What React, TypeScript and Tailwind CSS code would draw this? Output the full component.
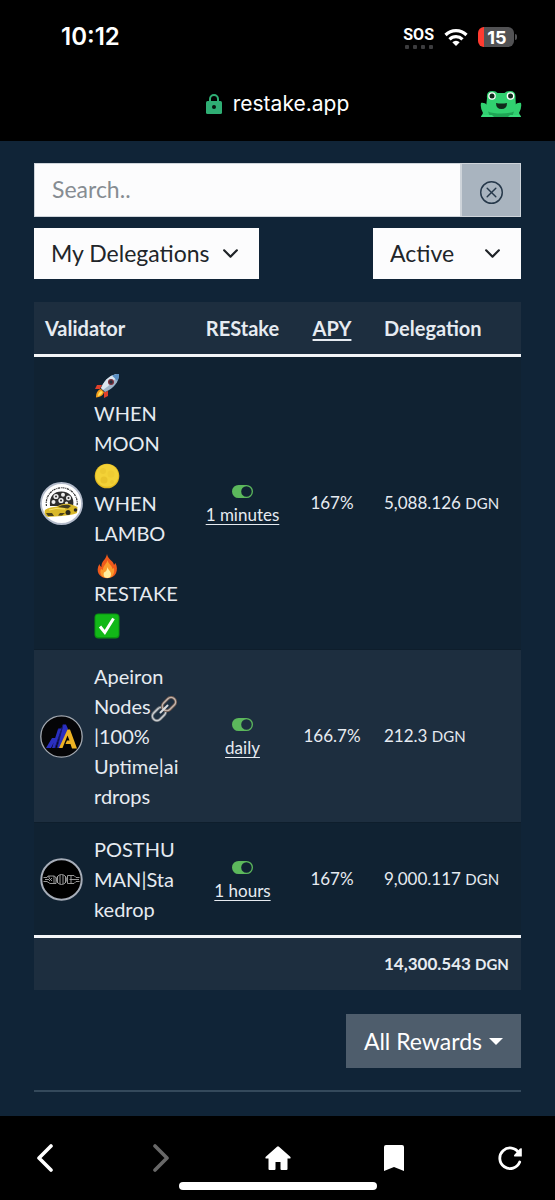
import { useState } from "react";
import type { ReactNode } from "react";
import { BsChevronDown, BsToggleOn, BsXCircle } from "react-icons/bs";

function Rocket() {
  return (
    <svg viewBox="0 0 26 26" className="-my-1 inline-block size-[26px] align-middle">
      <path d="M8 12 3 12 1 16 6 16Z M14 18 14 23 10 25 10 19Z" fill="#e0402a" />
      <path d="M7 16C3 17 2 21 2 24.500C6 24 9 23 10 19Z" fill="#f6a01d" />
      <path d="M7 18C5 19 4 21 4 23C6 22.500 8 21 8.500 19Z" fill="#ffe45c" />
      <path d="M25 1C17 1 11 6 7 15L11 19C20 15 25 9 25 1Z" fill="#9fb4c8" />
      <path d="M25 1C17 1 11 6 7 15L9 17C16 12 21 7 25 1Z" fill="#dbe6ef" />
      <path d="M25 1C22 1 20 1.500 18 2.600L23.300 8C24.500 6 25 4 25 1Z" fill="#5a8fc4" />
      <circle cx="17" cy="9" r="3" fill="#7d2f3a" />
      <circle cx="17" cy="9" r="1.700" fill="#22303d" />
    </svg>
  );
}

function Moon() {
  return (
    <svg viewBox="0 0 26 26" className="-my-1 inline-block size-[26px] align-middle">
      <circle cx="13" cy="13" r="12.300" fill="#e3b920" />
      <circle cx="13" cy="12.500" r="11.300" fill="#f3d237" />
      <circle cx="9" cy="8" r="3" fill="#ecc931" />
      <circle cx="17" cy="11" r="3.500" fill="#efcc33" />
      <circle cx="10" cy="17" r="3.500" fill="#e9c42c" />
      <circle cx="18" cy="19" r="2" fill="#ecc830" />
    </svg>
  );
}

function Fire() {
  return (
    <svg viewBox="0 0 26 26" className="-my-1 inline-block size-[26px] align-middle">
      <path d="M13 1C14 7 19 7 20 12L21.500 10C25 17 22 25 13.500 25.300C5 25.300 1 18 5.500 11C6 13 6.500 13.500 7.500 14C7 8 12 7 13 1Z" fill="#ef5a1c" />
      <path d="M13.500 7C14 11 18 12 18.500 16L20 15C21 21 18 25 13.500 25C8 25 5 21 7 16L9 17C9 12 13 11 13.500 7Z" fill="#fb9b2b" />
      <path d="M13.500 14C14 17 17 18 17 21C17 24 15 25 13.300 25C10 25 9 22 10 19.500C12 19 13 17 13.500 14Z" fill="#fff0a0" />
    </svg>
  );
}

function CheckMark() {
  return (
    <svg viewBox="0 0 26 26" className="-my-1 inline-block size-[26px] align-middle">
      <rect x="0.500" y="0.500" width="25" height="25" rx="4" fill="#0b9410" />
      <rect x="1.500" y="1.500" width="23" height="22.500" rx="3" fill="#12b818" />
      <path d="M6 13.500 10.800 19.500 19.500 5.500" fill="none" stroke="#fff" strokeWidth="3" />
    </svg>
  );
}

function ChainLink() {
  return (
    <svg viewBox="0 0 26 26" className="-my-1 inline-block size-[26px] align-middle" fill="none">
      <g transform="rotate(-45 13 13)">
        <rect x="-1.500" y="8.500" width="15" height="9" rx="4.500" stroke="#6f7479" strokeWidth="3" />
        <rect x="-1.500" y="8.500" width="15" height="9" rx="4.500" stroke="#c9cdd1" strokeWidth="1.400" />
        <rect x="12.500" y="8.500" width="15" height="9" rx="4.500" stroke="#6f5a50" strokeWidth="3" />
        <rect x="12.500" y="8.500" width="15" height="9" rx="4.500" stroke="#c2b5ae" strokeWidth="1.400" />
        <path d="M8 13H18" stroke="#d8dadd" strokeWidth="2" strokeLinecap="round" />
      </g>
    </svg>
  );
}

function LamboLogo() {
  return (
    <svg viewBox="0 0 43 43" className="block size-[43px]">
      <circle cx="21.500" cy="21.500" r="20.500" fill="#fff" stroke="#b4bccb" strokeWidth="1.800" />
      <path d="M6.500 24A15.500 15.500 0 1 1 37 24" fill="none" stroke="#333" strokeWidth="1.200" strokeDasharray="2.200 0.800 1 0.600" />
      <path d="M10 24C9 14 14 9.500 21.500 9.500S35 15 33 24Z" fill="#2d2d2d" />
      <g fill="#ececec">
        <circle cx="16" cy="14.500" r="2.600" />
        <circle cx="23" cy="12.800" r="2" />
        <circle cx="28.500" cy="16" r="2.500" />
        <circle cx="13.500" cy="20" r="2" />
        <circle cx="21" cy="18.500" r="2.600" />
        <circle cx="26.500" cy="21" r="1.600" />
      </g>
      <g fill="#2d2d2d">
        <circle cx="16" cy="14.500" r="1" />
        <circle cx="28.500" cy="16" r="1" />
        <circle cx="21" cy="18.500" r="1" />
      </g>
      <path d="M5 28C8 25.500 13 25 17 24.500C21 21.500 29 20.500 34 23.500L37.500 25L37 31C33 33 27 33 22 34L8 35C5 34 4 31 5 28Z" fill="#d9b827" />
      <path d="M18 25C22 22.500 28 22 31 24L28 26.500Z" fill="#403b20" />
      <path d="M6 31H12L14 34H8ZM20 31H25L22 33.500H18Z" fill="#4b421a" />
      <circle cx="28" cy="30.500" r="2.500" fill="#29271c" />
      <circle cx="35.500" cy="28" r="1.800" fill="#29271c" />
      <path d="M9 28 16 26.500 25 27" fill="none" stroke="#f5e16b" />
    </svg>
  );
}

function ApeironLogo() {
  return (
    <svg viewBox="0 0 43 43" className="block size-[43px]">
      <circle cx="21.500" cy="21.500" r="20.700" fill="#050507" stroke="#a3a9b1" strokeWidth="1.300" />
      <path d="M6 33 12 23H16L11 33ZM12 33 18 14 22 13 15 33ZM17 33 23 9.500H26L28 14 20 33Z" fill="#2a2fc0" />
      <path d="M18 14 22 13 15 33M23 9.500 17 33" fill="none" stroke="#15186e" />
      <path d="M19 33 27.500 14.500H30L37 33.500H32L30.500 29H25.500L27 25.500H29.500L27.500 20.500 22.500 33Z" fill="#eeb323" />
    </svg>
  );
}

function PosthumanLogo() {
  return (
    <svg viewBox="0 0 43 43" className="block size-[43px]">
      <circle cx="21.500" cy="21.500" r="20.200" fill="#000" stroke="#a6adb8" strokeWidth="2" />
      <g fill="none" stroke="#a7a7a7" strokeWidth="0.900">
        <path d="M3.500 19.500H7L8 18H14.500L16 20V25.500H10L7 23.500H3.500M9 18V20L12 23M12 20 9 23M14 18V25" />
        <path d="M39.500 19.500H36L34 17.500H27.500V25.500H34L36 23.500H39.500M31 17.500V25.500M29.500 21.500H34" />
        <circle cx="21.500" cy="21.500" r="5" />
        <path d="M20 17V26M23 17V26M17.500 18V25M25.500 18V25M5 21.500H9M34 21.500H39" />
      </g>
    </svg>
  );
}

function Frog() {
  return (
    <svg viewBox="0 0 42 28" className="block h-7 w-[42px]">
      <path d="M1 13C5 12 9 16 10 20L13 27H1L3 23Q0 18 1 13ZM41 13C37 12 33 16 32 20L29 27H41L39 23Q42 18 41 13Z" fill="#31d070" />
      <path d="M7 8Q6 1 12.500 1Q16 1 17.500 3H24.500Q26 1 30 1Q36 1 35.500 8L36 18Q36 27 21 27T6 18Z" fill="#31d070" />
      <path d="M8 21.500Q13 23.500 21 23.500T34 21.500L32 27H10Z" fill="#1fa455" />
      <path d="M1 27 2 25H12L14 27ZM41 27 40 25H30L28 27Z" fill="#39dc7c" />
      <circle cx="12" cy="6" r="3.800" fill="#fff" />
      <circle cx="30.500" cy="6" r="3.800" fill="#fff" />
      <circle cx="12" cy="6" r="2.500" fill="#10291b" />
      <circle cx="30.500" cy="6" r="2.500" fill="#10291b" />
      <path d="M16 13Q21 14 27 13Q27 19 21.500 19T16 13Z" fill="#10291b" />
    </svg>
  );
}

function StatusBar() {
  return (
    <div className="flex h-[30px] items-center justify-between pr-[38px] pl-[61px]">
      <span className="font-['Inter',sans-serif] text-[24px] font-semibold">10:12</span>
      <div className="flex items-center gap-[10px]">
        <div className="flex flex-col items-center gap-px">
          <span className="font-['Roboto',sans-serif] text-[16px] leading-[18px] font-bold">
            SOS
          </span>
          <svg viewBox="0 0 28 4" className="block h-1 w-7" fill="#3c3c3e">
            <rect width="4" height="4" rx="1" />
            <rect x="8" width="4" height="4" rx="1" />
            <rect x="16" width="4" height="4" rx="1" />
            <rect x="24" width="4" height="4" rx="1" />
          </svg>
        </div>
        <svg viewBox="0 0 24 18" className="block h-[18px] w-6" fill="none" stroke="#fff" strokeWidth="3.200">
          <path d="M1.500 7A15 15 0 0 1 22.500 7" />
          <path d="M5.500 11.300A9.300 9.300 0 0 1 18.500 11.300" />
          <path d="M12 18 8.300 14.300A5.300 5.300 0 0 1 15.700 14.300Z" fill="#fff" stroke="none" />
        </svg>
        <div className="flex items-center gap-px">
          <div className="flex h-5 w-9 items-center justify-center overflow-hidden rounded-md border-l-6 border-[#ff3b30] bg-[#525254] pr-1 font-['Inter',sans-serif] text-[18px] font-bold">
            15
          </div>
          <div className="h-[6px] w-[2px] rounded-r bg-[#525254]" />
        </div>
      </div>
    </div>
  );
}

const validators = [
  {
    id: "lambo",
    logo: <LamboLogo />,
    name: (
      <>
        <Rocket /> WHEN MOON <Moon /> WHEN LAMBO <Fire /> RESTAKE <CheckMark />
      </>
    ),
    interval: "1 minutes",
    apy: "167%",
    amount: "5,088.126",
  },
  {
    id: "apeiron",
    logo: <ApeironLogo />,
    name: (
      <>
        Apeiron Nodes
        <ChainLink />
        |100% Uptime|airdrops
      </>
    ),
    interval: "daily",
    apy: "166.7%",
    amount: "212.3",
  },
  {
    id: "posthuman",
    logo: <PosthumanLogo />,
    name: <>POSTHUMAN|Stakedrop</>,
    interval: "1 hours",
    apy: "167%",
    amount: "9,000.117",
  },
];

function Amount({ value }: { value: string }) {
  return (
    <>
      {value} <span className="text-[15px]">DGN</span>
    </>
  );
}

function Dropdown({ label, className }: { label: string; className: string }) {
  return (
    <div className={`relative text-[#212529] ${className}`}>
      <select
        aria-label={label}
        className="h-[51px] w-full appearance-none bg-[#fcfcfd] pl-[17px] text-[23px]"
      >
        <option>{label}</option>
      </select>
      <BsChevronDown className="pointer-events-none absolute top-[17px] right-5 size-[17px] stroke-1" />
    </div>
  );
}

function NavButton({ label, children }: { label: string; children: ReactNode }) {
  return (
    <button aria-label={label} className="flex h-[30px] w-[26px] items-center justify-center">
      {children}
    </button>
  );
}

export default function App() {
  const [search, setSearch] = useState("");

  return (
    <div className="flex min-h-screen flex-col bg-[#102437] font-['Lato',sans-serif] text-[#e6ebf1]">
      <header className="bg-black pt-[22px] pb-[23px] text-white">
        <StatusBar />
        <div className="mt-9 grid h-[30px] grid-cols-[1fr_auto_1fr] items-center px-[33px]">
          <a href="#" className="col-start-2 flex items-center gap-[11px] font-['Inter',sans-serif] text-[21px]">
            <svg viewBox="0 0 16 20" className="block h-5 w-4">
              <path d="M4 8V5A4 4 0 0 1 12 5V8" fill="none" stroke="#2fae74" strokeWidth="2" />
              <rect y="7" width="16" height="13" rx="1.500" fill="#2fae74" />
              <circle cx="8" cy="13" r="2" fill="#06150e" />
            </svg>
            restake.app
          </a>
          <button aria-label="Menu" className="justify-self-end">
            <Frog />
          </button>
        </div>
      </header>

      <main className="flex-1 px-[34px] pt-[22px] pb-6">
        <div className="flex h-[54px] border border-[#ced4da]">
          <input
            aria-label="Search"
            placeholder="Search.."
            value={search}
            onChange={(e) => setSearch(e.target.value)}
            className="min-w-0 flex-1 bg-[#fcfcfd] pb-[2px] pl-[17px] text-[23px] text-[#212529] placeholder:text-[#868c92]"
          />
          <button
            aria-label="Clear"
            onClick={() => setSearch("")}
            className="flex w-[60px] items-center justify-center border-l-2 border-[#ced4da] bg-[#a9b4bf] text-[#26384a]"
          >
            <BsXCircle className="mt-1 size-[23px]" />
          </button>
        </div>

        <div className="mt-[11px] flex justify-between">
          <Dropdown label="My Delegations" className="w-[225px]" />
          <Dropdown label="Active" className="w-[148px]" />
        </div>

        <table className="mt-[23px] w-full table-fixed border-collapse text-[17px] leading-[30px]">
          <colgroup>
            <col className="w-[49px]" />
            <col />
            <col className="w-[97px]" />
            <col className="w-[82px]" />
            <col className="w-[148px]" />
          </colgroup>
          <thead className="border-b-3 border-[#f4f6f8] bg-[#1d2e3f] text-[20px]">
            <tr>
              <th colSpan={2} className="p-[11px] text-left">Validator</th>
              <th className="py-[11px] text-center">REStake</th>
              <th className="py-[11px] text-center underline underline-offset-3">APY</th>
              <th className="p-[11px] text-left">Delegation</th>
            </tr>
          </thead>
          <tbody>
            {validators.map((v) => (
              <tr key={v.id} className="border-t border-[#0e1e2c] bg-[#102232] even:bg-[#1d2e3f]">
                <td className="pl-[6px]">{v.logo}</td>
                <td className="p-[11px] text-[20px] wrap-anywhere">{v.name}</td>
                <td className="text-center">
                  <button className="inline-flex flex-col items-center leading-[23px]">
                    <BsToggleOn className="h-[23px] w-[21px] text-[#5cb85c]" />
                    <span className="underline underline-offset-3">{v.interval}</span>
                  </button>
                </td>
                <td className="text-center">{v.apy}</td>
                <td className="px-[11px] whitespace-nowrap">
                  <Amount value={v.amount} />
                </td>
              </tr>
            ))}
          </tbody>
          <tfoot className="border-t-3 border-[#f4f6f8] bg-[#1d2e3f]">
            <tr>
              <td colSpan={4} />
              <td className="p-[11px] font-bold whitespace-nowrap">
                <Amount value="14,300.543" />
              </td>
            </tr>
          </tfoot>
        </table>

        <div className="mt-6 flex justify-end">
          <button className="flex h-[54px] items-center gap-[7px] bg-[#4e5d6c] px-[18px] text-[23px] text-white">
            All Rewards
            <svg viewBox="0 0 14 7" className="block h-[7px] w-[14px]" fill="currentColor">
              <path d="M0 0H14L7 7Z" />
            </svg>
          </button>
        </div>
        <hr className="mt-[22px] border-t-2 border-[#34495b]" />
      </main>

      <footer className="bg-black pt-[27px] pb-[11px] text-white">
        <nav className="flex justify-between px-8">
          <NavButton label="Back">
            <svg viewBox="0 0 16 28" className="h-7 w-4" fill="none" stroke="currentColor" strokeWidth="3.600" strokeLinecap="round" strokeLinejoin="round">
              <path d="M14 2 2 14 14 26" />
            </svg>
          </NavButton>
          <NavButton label="Forward">
            <svg viewBox="0 0 16 28" className="h-7 w-4 text-[#686868]" fill="none" stroke="currentColor" strokeWidth="3.600" strokeLinecap="round" strokeLinejoin="round">
              <path d="M2 2 14 14 2 26" />
            </svg>
          </NavButton>
          <NavButton label="Home">
            <svg viewBox="0 0 26 24" className="h-6 w-[26px]" fill="currentColor">
              <path d="M12 0.700Q13 0 14 0.700L25.500 11Q26 12.500 25 12.500H22.500V23Q22.500 24 21.500 24H16.500Q15.500 24 15.500 23V16H10.500V23Q10.500 24 9.500 24H4.500Q3.500 24 3.500 23V12.500H1Q0 12.500 0.500 11Z" />
            </svg>
          </NavButton>
          <NavButton label="Bookmark">
            <svg viewBox="0 0 20 26" className="h-[26px] w-5" fill="currentColor">
              <path d="M2 0H18Q20 0 20 2V26L10 22L0 26V2Q0 0 2 0Z" />
            </svg>
          </NavButton>
          <NavButton label="Reload">
            <svg viewBox="0 0 24 24" className="size-6" fill="none" stroke="currentColor">
              <path d="M21 7A10.300 10.300 0 1 0 21.700 16" strokeWidth="2.800" strokeLinecap="round" />
              <path d="M23.800 2.500V10.500H16.500Q15.500 10 16.200 9L22 2.500Q23.500 2 23.800 2.500Z" fill="currentColor" stroke="none" />
            </svg>
          </NavButton>
        </nav>
        <div className="mx-auto mt-[9px] h-2 w-[198px] rounded-full bg-white" />
      </footer>
    </div>
  );
}
